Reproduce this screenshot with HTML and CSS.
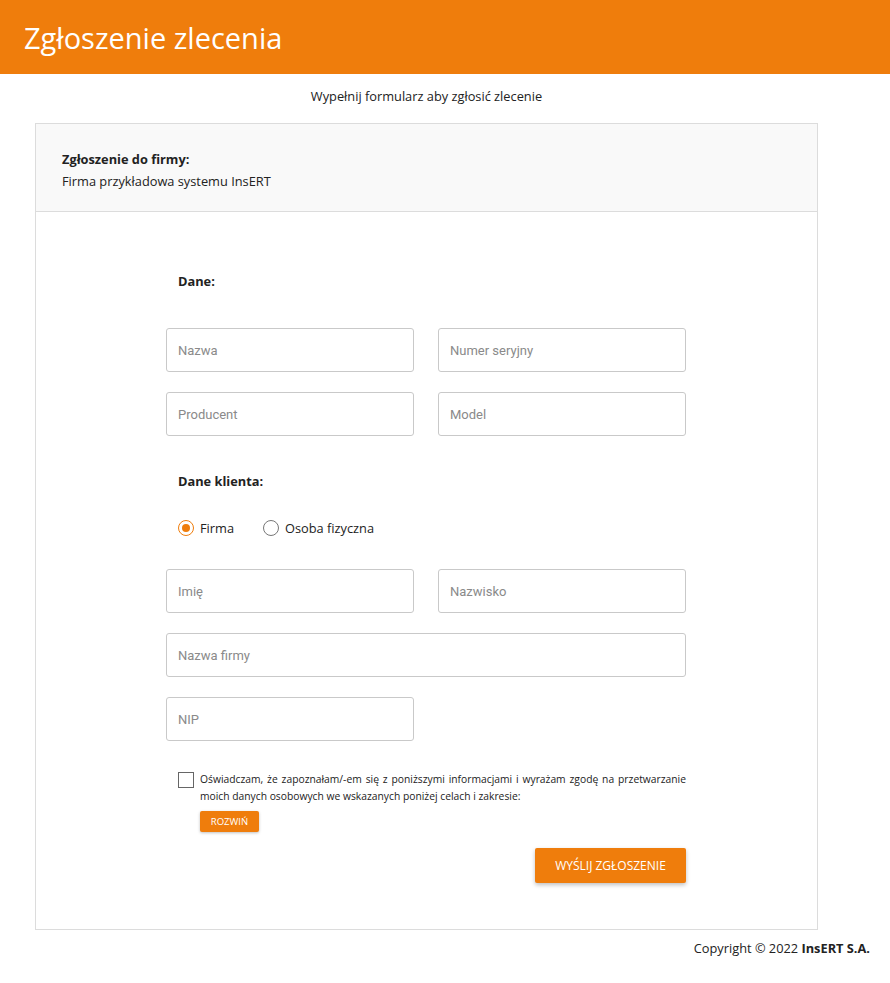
FILE: index.html
```html
<!DOCTYPE html>
<html lang="pl">
<head>
    <meta charset="UTF-8">
    <meta name="viewport" content="width=device-width, initial-scale=1.0">
    <title>Zgłoszenie zlecenia</title>
    <link rel="stylesheet" href="styles.css">
</head>
<body>
    <header class="top-bar">
        <h1>Zgłoszenie zlecenia</h1>
    </header>

    <div class="page">
        <div class="content">
            <p class="intro">Wypełnij formularz aby zgłosić zlecenie</p>

            <div class="card">
                <div class="card-head">
                    <div class="card-head-title">Zgłoszenie do firmy:</div>
                    <div>Firma przykładowa systemu InsERT</div>
                </div>

                <form class="card-body" id="orderForm">
                    <div class="section-title">Dane:</div>
                    <div class="fields">
                        <input type="text" placeholder="Nazwa">
                        <input type="text" placeholder="Numer seryjny">
                        <input type="text" placeholder="Producent">
                        <input type="text" placeholder="Model">
                    </div>

                    <div class="section-title client-title">Dane klienta:</div>
                    <div class="radios">
                        <label><input type="radio" name="type" checked> Firma</label>
                        <label><input type="radio" name="type"> Osoba fizyczna</label>
                    </div>

                    <div class="fields">
                        <input type="text" placeholder="Imię">
                        <input type="text" placeholder="Nazwisko">
                        <input type="text" class="wide" placeholder="Nazwa firmy">
                        <input type="text" placeholder="NIP">
                    </div>

                    <div class="consent">
                        <input type="checkbox" id="consent">
                        <div>
                            <label for="consent">Oświadczam, że zapoznałam/-em się z poniższymi informacjami i wyrażam zgodę na przetwarzanie moich danych osobowych we wskazanych poniżej celach i zakresie:</label>
                            <button type="button" class="btn-small">ROZWIŃ</button>
                        </div>
                    </div>

                    <div class="actions">
                        <button type="button" class="btn-submit">WYŚLIJ ZGŁOSZENIE</button>
                    </div>
                </form>
            </div>
        </div>

        <footer class="footer">Copyright © 2022 <b>InsERT S.A.</b></footer>
    </div>
</body>
</html>
```

FILE: styles.css
```css
body {
    margin: 0;
    padding: 0;
    font-family: "Open Sans", Arial, sans-serif;
    font-size: 12.8px;
    color: #222;
    background-color: #fff;
}

.top-bar {
    background-color: #ef7d0c;
    height: 74px;
    display: flex;
    align-items: center;
    padding-left: 24px;
}

.top-bar h1 {
    margin: 0;
    color: #fff;
    font-size: 29px;
    font-weight: normal;
}

.page {
    padding: 0 20px 0 35px;
}

.content {
    width: 783px;
}

.intro {
    margin: 13px 0 18px;
    line-height: 18px;
    text-align: center;
}

.card {
    border: 1px solid #dcdcdc;
}

.card-head {
    background-color: #f9f9f9;
    border-bottom: 1px solid #dcdcdc;
    padding: 24px 26px 19px;
    line-height: 22px;
}

.card-head-title {
    font-weight: bold;
}

.card-body {
    width: 520px;
    margin: 0 0 0 130px;
    padding: 58px 0 46px;
}

.section-title {
    font-weight: bold;
    line-height: 22px;
    padding-left: 12px;
    margin-bottom: 36px;
}

.client-title {
    margin-top: 34px;
    margin-bottom: 25px;
}

.fields {
    display: grid;
    grid-template-columns: 248px 248px;
    column-gap: 24px;
    row-gap: 20px;
}

.fields input {
    height: 44px;
    box-sizing: border-box;
    border: 1px solid #c9c9c9;
    border-radius: 3px;
    padding: 0 11px;
    font-family: Roboto, Arial, sans-serif;
    font-size: 13px;
}

.fields input::placeholder {
    color: #8a8a8a;
}

.fields .wide {
    grid-column: 1 / 3;
}

.radios {
    display: flex;
    gap: 29px;
    padding-left: 12px;
    line-height: 22px;
    margin-bottom: 30px;
}

.radios label {
    display: flex;
    align-items: center;
    gap: 6px;
}

.radios input {
    appearance: none;
    margin: 0;
    width: 16px;
    height: 16px;
    border: 1px solid #777;
    border-radius: 50%;
    box-sizing: border-box;
    display: grid;
    place-items: center;
}

.radios input:checked {
    border-color: #ef7d0c;
}

.radios input:checked::after {
    content: "";
    width: 8px;
    height: 8px;
    border-radius: 50%;
    background-color: #ef7d0c;
}

.consent {
    display: flex;
    gap: 6px;
    padding-left: 12px;
    margin-top: 30px;
}

.consent input {
    appearance: none;
    margin: 1px 0 0;
    width: 16px;
    height: 16px;
    border: 1px solid #666;
    box-sizing: border-box;
    flex: none;
}

.consent label {
    display: block;
    font-size: 10.3px;
    line-height: 17px;
    text-align: justify;
}

.btn-small {
    margin-top: 6px;
    background-color: #ef7d0c;
    color: #fff;
    border: none;
    border-radius: 2px;
    font-family: "Open Sans", Arial, sans-serif;
    font-size: 9.5px;
    width: 59px;
    height: 21px;
    padding: 0;
    box-shadow: 0 1px 3px rgba(0, 0, 0, 0.25);
}

.actions {
    display: flex;
    justify-content: flex-end;
    margin-top: 16px;
}

.btn-submit {
    background-color: #ef7d0c;
    color: #fff;
    border: none;
    border-radius: 2px;
    font-family: "Open Sans", Arial, sans-serif;
    font-size: 12px;
    width: 151px;
    height: 35px;
    padding: 0;
    box-shadow: 0 2px 4px rgba(0, 0, 0, 0.25);
}

.footer {
    text-align: right;
    margin-top: 9px;
    line-height: 18px;
    color: #222;
}
```
